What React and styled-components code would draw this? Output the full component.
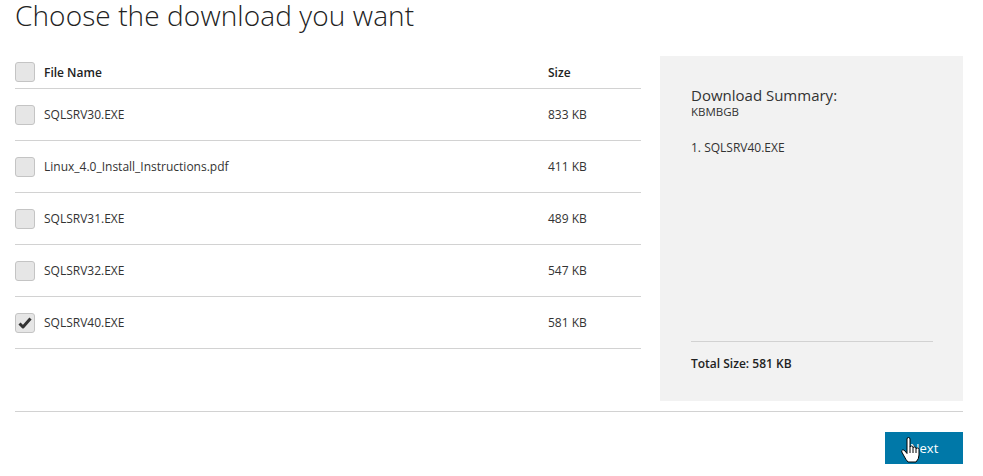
import React from 'react';
import styled, { createGlobalStyle } from 'styled-components';

const GlobalStyle = createGlobalStyle`
  html, body {
    margin: 0;
    padding: 0;
    background: #fff;
    font-family: "Open Sans", "Noto Sans", Arial, sans-serif;
    color: #333;
  }
`;

const Page = styled.div`
  width: 948px;
  padding: 0 20px 0 15px;
`;

const Title = styled.h1`
  margin: 0;
  padding-top: 0;
  font-size: 28px;
  font-weight: 300;
  line-height: 30px;
  color: #222;
  letter-spacing: 0.1px;
`;

const Main = styled.div`
  display: flex;
  gap: 19px;
  margin-top: 26px;
  align-items: flex-start;
`;

const Table = styled.div`
  width: 626px;
`;

const Row = styled.div`
  display: flex;
  align-items: center;
  height: ${p => (p.$head ? '32px' : '51px')};
  border-bottom: 1px solid #d2d2d2;
  font-size: 12px;
  font-weight: ${p => (p.$head ? 600 : 400)};
  color: ${p => (p.$head ? '#222' : '#333')};
`;

const Box = styled.span`
  box-sizing: border-box;
  width: 20px;
  height: 20px;
  border: 1px solid #c4c4c4;
  border-radius: 3px;
  background: #e6e6e6;
  display: flex;
  align-items: center;
  justify-content: center;
  flex-shrink: 0;
`;

const Name = styled.span`
  margin-left: 9px;
  width: 504px;
`;

const Size = styled.span``;

const Panel = styled.aside`
  box-sizing: border-box;
  width: 303px;
  height: 345px;
  background: #f2f2f2;
  padding: 30px 30px 0 31px;
  display: flex;
  flex-direction: column;
`;

const PanelTitle = styled.div`
  font-size: 15px;
  line-height: 18px;
  color: #333;
`;

const Ref = styled.div`
  font-size: 11.5px;
  line-height: 16px;
`;

const Item = styled.div`
  margin-top: 19px;
  font-size: 12px;
  flex: 1;
`;

const Total = styled.div`
  border-top: 1px solid #d2d2d2;
  margin-bottom: 29px;
  padding-top: 13px;
  font-size: 12px;
  font-weight: 600;
  color: #222;
`;

const Divider = styled.hr`
  margin: 10px 0 0 0;
  border: none;
  border-top: 1px solid #d2d2d2;
`;

const Footer = styled.div`
  display: flex;
  justify-content: flex-end;
  padding-top: 20px;
`;

const NextButton = styled.button`
  position: relative;
  width: 78px;
  height: 32px;
  border: none;
  background: #0078a8;
  color: #fff;
  font-family: inherit;
  font-size: 13px;
  padding: 0;
`;

const Cursor = styled.svg`
  position: absolute;
  left: 16px;
  top: 5px;
`;

const Check = () => (
  <svg width="14" height="14" viewBox="0 0 14 14">
    <path d="M1.5 7.5 L5 11 L12.5 2.5" fill="none" stroke="#333" strokeWidth="3" strokeLinejoin="round" />
  </svg>
);

const files = [
  { name: 'SQLSRV30.EXE', size: '833 KB' },
  { name: 'Linux_4.0_Install_Instructions.pdf', size: '411 KB' },
  { name: 'SQLSRV31.EXE', size: '489 KB' },
  { name: 'SQLSRV32.EXE', size: '547 KB' },
  { name: 'SQLSRV40.EXE', size: '581 KB', checked: true },
];

export default function App() {
  return (
    <Page>
      <GlobalStyle />
      <Title>Choose the download you want</Title>
      <Main>
        <Table>
          <Row $head>
            <Box />
            <Name>File Name</Name>
            <Size>Size</Size>
          </Row>
          {files.map(f => (
            <Row key={f.name}>
              <Box>{f.checked && <Check />}</Box>
              <Name>{f.name}</Name>
              <Size>{f.size}</Size>
            </Row>
          ))}
        </Table>
        <Panel>
          <PanelTitle>Download Summary:</PanelTitle>
          <Ref>KBMBGB</Ref>
          <Item>1. SQLSRV40.EXE</Item>
          <Total>Total Size: 581 KB</Total>
        </Panel>
      </Main>
      <Divider />
      <Footer>
        <NextButton>
          Next
          <Cursor width="20" height="26" viewBox="0 0 20 26">
            <path
              d="M6 2 Q6 0.5 7.5 0.5 Q9 0.5 9 2 V10 Q9 9 10.5 9 Q12 9 12 10.5 V11 Q12 10 13.5 10 Q15 10 15 11.5 V12 Q15 11 16.5 11 Q18 11 18 12.5 V18 Q18 22 15 25 H7 Q5 23 3 19 L0.8 15 Q0.3 13.5 1.5 13 Q2.8 12.6 4 14 L6 16.5 Z"
              fill="#fff"
              stroke="#000"
              strokeWidth="1"
              strokeLinejoin="round"
            />
            <path d="M9 10 V16 M12 11 V16 M15 12 V16" stroke="#000" strokeWidth="1" />
          </Cursor>
        </NextButton>
      </Footer>
    </Page>
  );
}
